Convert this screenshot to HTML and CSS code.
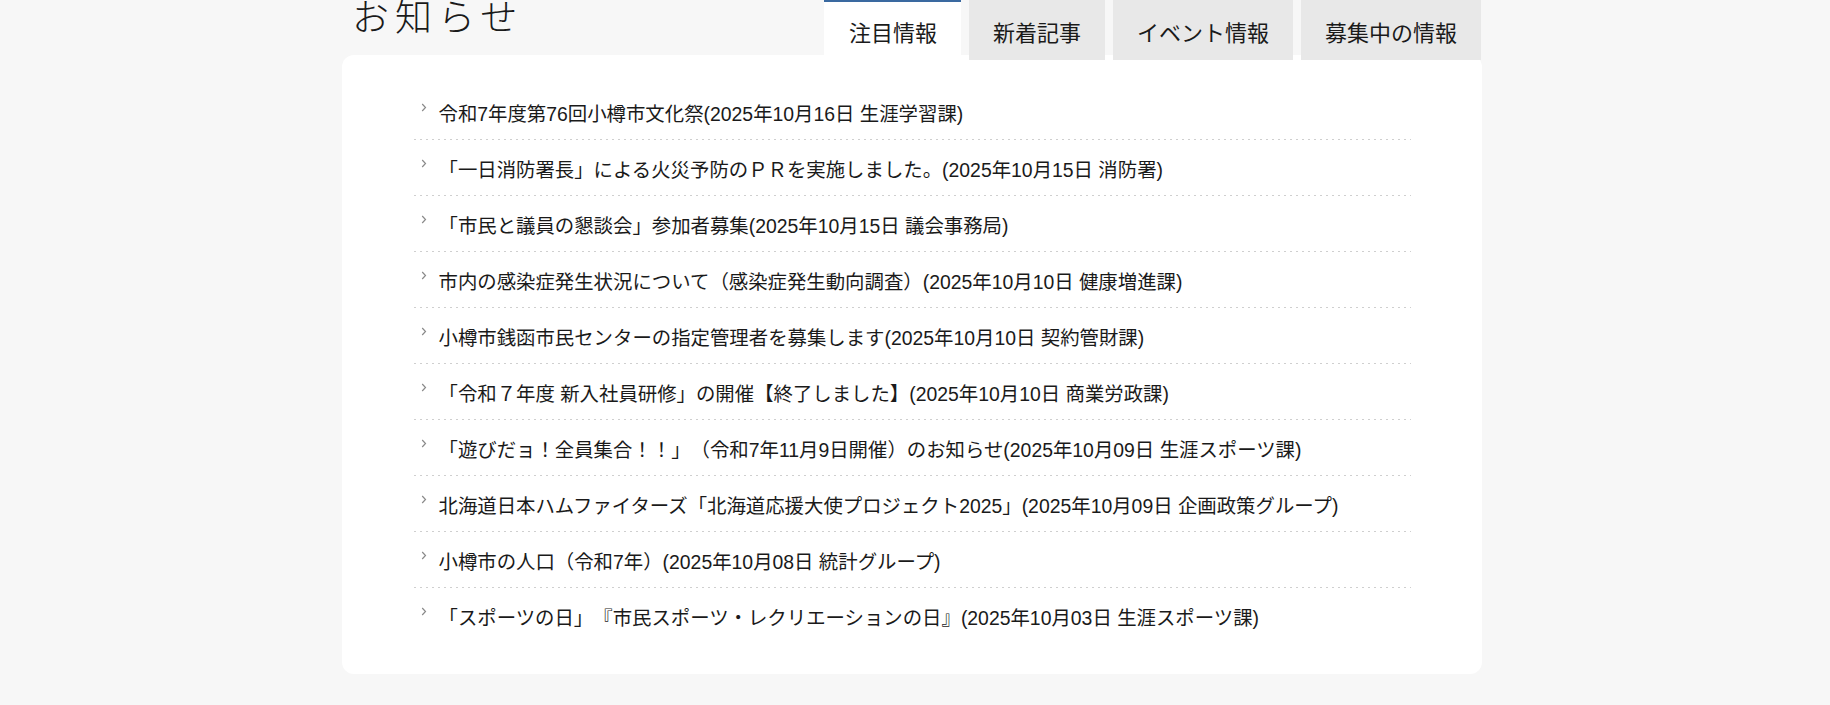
FILE: index.html
```html
<!DOCTYPE html>
<html lang="ja">
<head>
<meta charset="utf-8">
<title>お知らせ</title>
<link rel="stylesheet" href="styles.css">
</head>
<body>
<div class="wrap">
  <div class="head">
    <h2 class="title">お知らせ</h2>
    <ul class="tabs">
      <li class="tab active">注目情報</li>
      <li class="tab">新着記事</li>
      <li class="tab">イベント情報</li>
      <li class="tab">募集中の情報</li>
    </ul>
  </div>
  <div class="card">
    <ul class="list">
      <li class="item"><svg class="chev" width="6" height="9" viewBox="0 0 6 9"><polyline points="1.2,1 4.5,4.5 1.2,8" fill="none" stroke="#8a8a8a" stroke-width="1.2"/></svg><a>令和7年度第76回小樽市文化祭(2025年10月16日 生涯学習課)</a></li>
      <li class="item"><svg class="chev" width="6" height="9" viewBox="0 0 6 9"><polyline points="1.2,1 4.5,4.5 1.2,8" fill="none" stroke="#8a8a8a" stroke-width="1.2"/></svg><a>「一日消防署長」による火災予防のＰＲを実施しました。(2025年10月15日 消防署)</a></li>
      <li class="item"><svg class="chev" width="6" height="9" viewBox="0 0 6 9"><polyline points="1.2,1 4.5,4.5 1.2,8" fill="none" stroke="#8a8a8a" stroke-width="1.2"/></svg><a>「市民と議員の懇談会」参加者募集(2025年10月15日 議会事務局)</a></li>
      <li class="item"><svg class="chev" width="6" height="9" viewBox="0 0 6 9"><polyline points="1.2,1 4.5,4.5 1.2,8" fill="none" stroke="#8a8a8a" stroke-width="1.2"/></svg><a>市内の感染症発生状況について（感染症発生動向調査）(2025年10月10日 健康増進課)</a></li>
      <li class="item"><svg class="chev" width="6" height="9" viewBox="0 0 6 9"><polyline points="1.2,1 4.5,4.5 1.2,8" fill="none" stroke="#8a8a8a" stroke-width="1.2"/></svg><a>小樽市銭函市民センターの指定管理者を募集します(2025年10月10日 契約管財課)</a></li>
      <li class="item"><svg class="chev" width="6" height="9" viewBox="0 0 6 9"><polyline points="1.2,1 4.5,4.5 1.2,8" fill="none" stroke="#8a8a8a" stroke-width="1.2"/></svg><a>「令和７年度 新入社員研修」の開催【終了しました】(2025年10月10日 商業労政課)</a></li>
      <li class="item"><svg class="chev" width="6" height="9" viewBox="0 0 6 9"><polyline points="1.2,1 4.5,4.5 1.2,8" fill="none" stroke="#8a8a8a" stroke-width="1.2"/></svg><a>「遊びだョ！全員集合！！」（令和7年11月9日開催）のお知らせ(2025年10月09日 生涯スポーツ課)</a></li>
      <li class="item"><svg class="chev" width="6" height="9" viewBox="0 0 6 9"><polyline points="1.2,1 4.5,4.5 1.2,8" fill="none" stroke="#8a8a8a" stroke-width="1.2"/></svg><a>北海道日本ハムファイターズ「北海道応援大使プロジェクト2025」(2025年10月09日 企画政策グループ)</a></li>
      <li class="item"><svg class="chev" width="6" height="9" viewBox="0 0 6 9"><polyline points="1.2,1 4.5,4.5 1.2,8" fill="none" stroke="#8a8a8a" stroke-width="1.2"/></svg><a>小樽市の人口（令和7年）(2025年10月08日 統計グループ)</a></li>
      <li class="item"><svg class="chev" width="6" height="9" viewBox="0 0 6 9"><polyline points="1.2,1 4.5,4.5 1.2,8" fill="none" stroke="#8a8a8a" stroke-width="1.2"/></svg><a>「スポーツの日」『市民スポーツ・レクリエーションの日』(2025年10月03日 生涯スポーツ課)</a></li>
    </ul>
  </div>
</div>
</body>
</html>
```

FILE: styles.css
```css
html, body {
  margin: 0;
  padding: 0;
  background: #f7f7f7;
  color: #1a1a1a;
  font-family: "Liberation Sans", "Noto Sans CJK JP", sans-serif;
  text-spacing-trim: space-all;
}

.wrap {
  width: 1140px;
  margin-left: calc(50% - 573px);
}

.head {
  height: 55px;
  display: flex;
  justify-content: space-between;
  align-items: flex-start;
  position: relative;
  z-index: 2;
}

.title {
  margin: -2px 0 0 10px;
  font-family: "Noto Sans CJK JP", sans-serif;
  font-weight: 300;
  font-size: 37px;
  line-height: 34px;
  letter-spacing: 6px;
  color: #1a1a1a;
}

.tabs {
  list-style: none;
  margin: 0 1px 0 0;
  padding: 0;
  display: flex;
  gap: 8px;
}

.tab {
  height: 58px;
  padding: 0 24px;
  display: flex;
  align-items: center;
  background: #e8e8e8;
  border-top: 2px solid #e8e8e8;
  font-family: "Noto Sans CJK JP", sans-serif;
  font-size: 22px;
  color: #1a1a1a;
}

.tab.active {
  background: #fff;
  border-top-color: #3a69a0;
  width: 88px;
  justify-content: center;
  padding: 0 24px 0 25px;
}

.card {
  background: #fff;
  border-radius: 12px;
  padding: 29px 0 30px;
}

.list {
  list-style: none;
  margin: 0 auto;
  padding: 0;
  width: 997px;
}

.item {
  position: relative;
  padding: 17px 0 12px 25px;
  line-height: 27px;
  font-size: 19.4px;
  background-image: repeating-linear-gradient(to right, #cfcfcf 0 2px, transparent 2px 6px);
  background-size: 100% 1px;
  background-position: left bottom;
  background-repeat: no-repeat;
}

.item:last-child {
  background-image: none;
}

.item a {
  color: #1a1a1a;
  text-decoration: none;
}

.chev {
  position: absolute;
  left: 7px;
  top: 19px;
}
```
